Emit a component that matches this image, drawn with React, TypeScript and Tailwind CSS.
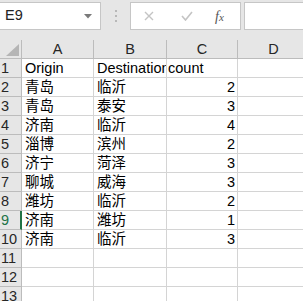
import React from 'react';

const rows: [string, string, string][] = [
  ['Origin', 'Destination', 'count'],
  ['青岛', '临沂', '2'],
  ['青岛', '泰安', '3'],
  ['济南', '临沂', '4'],
  ['淄博', '滨州', '2'],
  ['济宁', '菏泽', '3'],
  ['聊城', '威海', '3'],
  ['潍坊', '临沂', '2'],
  ['济南', '潍坊', '1'],
  ['济南', '临沂', '3'],
  ['', '', ''],
  ['', '', ''],
  ['', '', ''],
];

const font = { fontFamily: '"Liberation Sans", "Noto Sans CJK SC", sans-serif' };

const Toolbar: React.FC = () => (
  <div className="h-[40px] bg-[#e6e6e6] flex items-start pt-[2px]">
    <div className="w-[101px] h-[28px] bg-white border border-l-0 border-[#c6c6c6] flex items-center justify-between pl-[5px] pr-[8px] text-[14.5px] text-[#222]">
      <span>E9</span>
      <svg width="8" height="5" viewBox="0 0 8 5">
        <path d="M0 0h8L4 4.5z" fill="#7a7a7a" />
      </svg>
    </div>
    <div className="w-[29px] h-[28px] flex flex-col items-center justify-center gap-[3px]">
      <span className="w-[2px] h-[2px] bg-[#b8b8b8]" />
      <span className="w-[2px] h-[2px] bg-[#b8b8b8]" />
      <span className="w-[2px] h-[2px] bg-[#b8b8b8]" />
    </div>
    <div className="w-[111px] h-[28px] bg-white border border-[#c6c6c6] flex items-center">
      <svg className="ml-[13px]" width="10" height="10" viewBox="0 0 10 10">
        <path d="M1 1l8 8M9 1l-8 8" stroke="#c4c4c4" strokeWidth="1.4" />
      </svg>
      <svg className="ml-[27px]" width="12" height="10" viewBox="0 0 12 10">
        <path d="M1 5l3.5 4L11 1" stroke="#c4c4c4" strokeWidth="1.6" fill="none" />
      </svg>
      <span
        className="ml-[22px] italic text-[14px] text-[#555]"
        style={{ fontFamily: '"Liberation Serif", serif' }}
      >
        f<span className="text-[11px]">x</span>
      </span>
    </div>
    <div className="ml-[3px] flex-1 h-[28px] bg-white border border-r-0 border-[#c6c6c6]" />
  </div>
);

export default function App() {
  return (
    <div className="w-[303px] h-[301px] overflow-hidden bg-white" style={font}>
      <Toolbar />
      <div className="grid grid-cols-[22px_72px_73px_71px_72px] auto-rows-[19px] text-[14.5px] leading-[18px]">
        <div className="bg-[#e6e6e6] border-r border-b border-[#bcbcbc] flex items-end justify-end pr-[2px] pb-[2px]">
          <svg width="13" height="12" viewBox="0 0 13 12">
            <path d="M13 0V12H0z" fill="#b5b5b5" />
          </svg>
        </div>
        {['A', 'B', 'C', 'D'].map((c) => (
          <div
            key={c}
            className="bg-[#e6e6e6] border-r border-b border-[#bcbcbc] text-center text-[#262626]"
          >
            {c}
          </div>
        ))}
        {rows.map((r, i) => {
          const sel = i === 8;
          return (
            <React.Fragment key={i}>
              <div
                className={
                  sel
                    ? 'bg-[#e6e6e6] border-b border-[#bcbcbc] border-r-2 border-r-[#217346] pl-[1px] text-[#217346]'
                    : 'bg-[#e6e6e6] border-r border-b border-[#bcbcbc] pl-[1px] text-[#262626]'
                }
              >
                {i + 1}
              </div>
              <div className="border-r border-b border-[#d4d4d4] pl-[3px] whitespace-nowrap overflow-hidden">
                {r[0]}
              </div>
              <div className="border-r border-b border-[#d4d4d4] pl-[3px] whitespace-nowrap overflow-hidden">
                {r[1]}
              </div>
              <div
                className={
                  i === 0
                    ? 'border-r border-b border-[#d4d4d4] pl-[1px] whitespace-nowrap overflow-hidden'
                    : 'border-r border-b border-[#d4d4d4] pr-[2px] text-right whitespace-nowrap overflow-hidden'
                }
              >
                {r[2]}
              </div>
              <div className="border-r border-b border-[#d4d4d4]" />
            </React.Fragment>
          );
        })}
      </div>
    </div>
  );
}
